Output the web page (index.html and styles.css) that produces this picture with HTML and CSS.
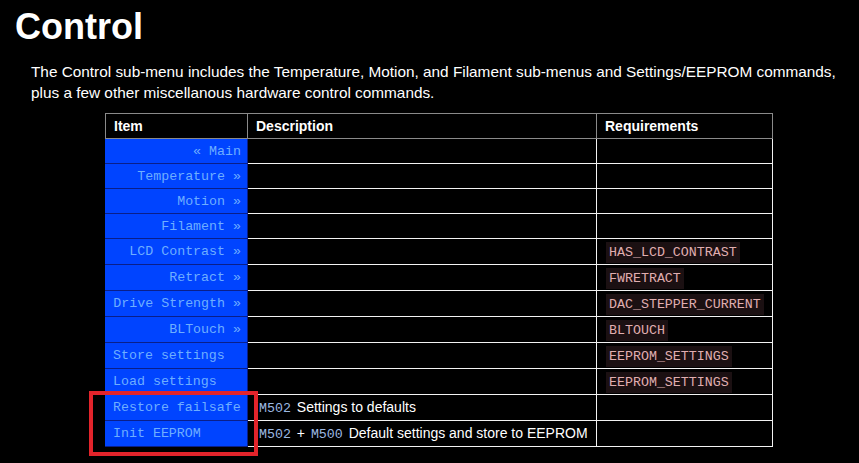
FILE: index.html
```html
<!DOCTYPE html>
<html>
<head>
<meta charset="utf-8">
<link rel="stylesheet" href="styles.css">
</head>
<body>
<h1 class="title">Control</h1>
<p class="intro">The Control sub-menu includes the Temperature, Motion, and Filament sub-menus and Settings/EEPROM commands, plus a few other miscellanous hardware control commands.</p>
<div class="wrap">
<table class="menu">
  <colgroup>
    <col class="c-item"><col class="c-desc"><col class="c-req">
  </colgroup>
  <thead>
    <tr><th>Item</th><th>Description</th><th>Requirements</th></tr>
  </thead>
  <tbody>
    <tr><td class="item sub">« Main</td><td></td><td></td></tr>
    <tr><td class="item sub">Temperature »</td><td></td><td></td></tr>
    <tr><td class="item sub">Motion »</td><td></td><td></td></tr>
    <tr><td class="item sub">Filament »</td><td></td><td></td></tr>
    <tr class="tall"><td class="item sub">LCD Contrast »</td><td></td><td><code class="req">HAS_LCD_CONTRAST</code></td></tr>
    <tr class="tall"><td class="item sub">Retract »</td><td></td><td><code class="req">FWRETRACT</code></td></tr>
    <tr class="tall"><td class="item sub">Drive Strength »</td><td></td><td><code class="req">DAC_STEPPER_CURRENT</code></td></tr>
    <tr class="tall"><td class="item sub">BLTouch »</td><td></td><td><code class="req">BLTOUCH</code></td></tr>
    <tr class="tall"><td class="item">Store settings</td><td></td><td><code class="req">EEPROM_SETTINGS</code></td></tr>
    <tr class="tall"><td class="item">Load settings</td><td></td><td><code class="req">EEPROM_SETTINGS</code></td></tr>
    <tr class="tall"><td class="item">Restore failsafe</td><td><code class="gc">M502</code> Settings to defaults</td><td></td></tr>
    <tr class="tall"><td class="item">Init EEPROM</td><td><code class="gc">M502</code> + <code class="gc">M500</code> Default settings and store to EEPROM</td><td></td></tr>
  </tbody>
</table>
<div class="highlight"></div>
</div>
</body>
</html>
```
FILE: styles.css
```css
html, body {
  background: #000;
}
body {
  margin: 0;
  padding: 0 15px 16px 15px;
  color: #fff;
  font-family: "Liberation Sans", Arial, sans-serif;
}
.title {
  margin: 6px 0 0 0;
  font-size: 36px;
  font-weight: bold;
  line-height: 41px;
}
.intro {
  margin: 14px 0 0 16px;
  font-size: 15.35px;
  line-height: 21px;
}
.wrap {
  position: relative;
  margin: 10px 0 0 90px;
  width: 667px;
}
.menu {
  border-collapse: collapse;
  width: 667px;
  table-layout: fixed;
  font-size: 14px;
}
.c-item { width: 142px; }
.c-desc { width: 349px; }
.c-req { width: 176px; }
.menu th {
  border: 1px solid #8a8a8a;
  text-align: left;
  font-weight: bold;
  height: 24px;
  padding: 0 0 0 8px;
}
.menu td {
  border: 1px solid #f2f2f2;
  height: 24px;
  padding: 0 0 0 9px;
  white-space: nowrap;
  overflow: hidden;
}
.menu tr.tall td {
  height: 25px;
}
.menu td.item {
  background: #0044ff;
  border-color: #0a1f8a;
  border-left-color: #0044ff;
  color: #6eaeff;
  font-family: "Liberation Mono", "Courier New", monospace;
  font-size: 13.3px;
  padding: 0 6px 0 7px;
}
.menu td.sub {
  text-align: right;
}
code {
  font-family: "Liberation Mono", "Courier New", monospace;
  font-size: 13.3px;
}
.req {
  color: #e0aeb0;
  background: #1b1012;
  padding: 3px 3px;
}
.gc {
  color: #9cb8e2;
  padding: 0 2px;
}
.highlight {
  position: absolute;
  left: -16px;
  top: 278px;
  width: 161px;
  height: 57px;
  border: 4px solid #e3242b;
}
```
